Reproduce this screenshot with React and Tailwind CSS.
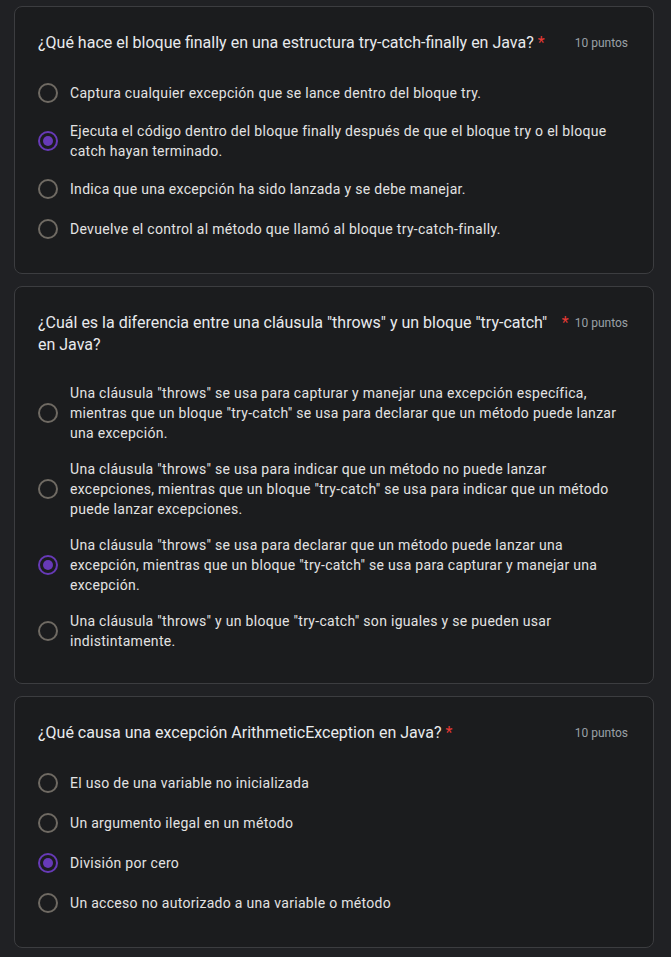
import React from 'react';

const questions = [
  {
    title: '¿Qué hace el bloque finally en una estructura try-catch-finally en Java?',
    options: [
      'Captura cualquier excepción que se lance dentro del bloque try.',
      'Ejecuta el código dentro del bloque finally después de que el bloque try o el bloque catch hayan terminado.',
      'Indica que una excepción ha sido lanzada y se debe manejar.',
      'Devuelve el control al método que llamó al bloque try-catch-finally.',
    ],
    selected: 1,
  },
  {
    title: '¿Cuál es la diferencia entre una cláusula "throws" y un bloque "try-catch" en Java?',
    options: [
      'Una cláusula "throws" se usa para capturar y manejar una excepción específica, mientras que un bloque "try-catch" se usa para declarar que un método puede lanzar una excepción.',
      'Una cláusula "throws" se usa para indicar que un método no puede lanzar excepciones, mientras que un bloque "try-catch" se usa para indicar que un método puede lanzar excepciones.',
      'Una cláusula "throws" se usa para declarar que un método puede lanzar una excepción, mientras que un bloque "try-catch" se usa para capturar y manejar una excepción.',
      'Una cláusula "throws" y un bloque "try-catch" son iguales y se pueden usar indistintamente.',
    ],
    selected: 2,
  },
  {
    title: '¿Qué causa una excepción ArithmeticException en Java?',
    options: [
      'El uso de una variable no inicializada',
      'Un argumento ilegal en un método',
      'División por cero',
      'Un acceso no autorizado a una variable o método',
    ],
    selected: 2,
  },
];

// Radio circle, purple when checked
const Radio = ({ checked }) => (
  <div
    className={
      checked
        ? 'w-5 h-5 shrink-0 rounded-full border-2 border-[#673ab7] flex items-center justify-center'
        : 'w-5 h-5 shrink-0 rounded-full border-2 border-[#6f6a63]'
    }
  >
    {checked && <div className="w-[10px] h-[10px] rounded-full bg-[#673ab7]" />}
  </div>
);

const QuestionCard = ({ q }) => (
  <div className="w-[640px] ml-[14px] bg-[#1b1c1e] border border-[#3c3d40] rounded-lg pl-[23px] pr-[25px] pt-[25px] pb-[24px]">
    <div className="flex items-start">
      <span className="text-[16px] leading-[22px] text-[#e8eaed]">{q.title}</span>
      <span className="ml-1 text-[16px] leading-[22px] text-[#e53935]">*</span>
      <span className="ml-auto pl-[6px] shrink-0 text-[12px] leading-[22px] text-[#9aa0a6]">10 puntos</span>
    </div>

    <div className="mt-[19px] flex flex-col">
      {q.options.map((opt, i) => (
        <div key={i} className="flex items-center gap-3 min-h-[40px] py-2">
          <Radio checked={i === q.selected} />
          <span className="text-[14px] leading-[20px] tracking-[0.3px] text-[#e3e3e3]">{opt}</span>
        </div>
      ))}
    </div>
  </div>
);

const App = () => {
  return (
    <div
      className="min-h-screen bg-[#202124] pt-[6px] pb-[10px] flex flex-col gap-3"
      style={{ fontFamily: 'Roboto, "Liberation Sans", sans-serif' }}
    >
      {questions.map((q, i) => (
        <QuestionCard key={i} q={q} />
      ))}
    </div>
  );
};

export default App;
